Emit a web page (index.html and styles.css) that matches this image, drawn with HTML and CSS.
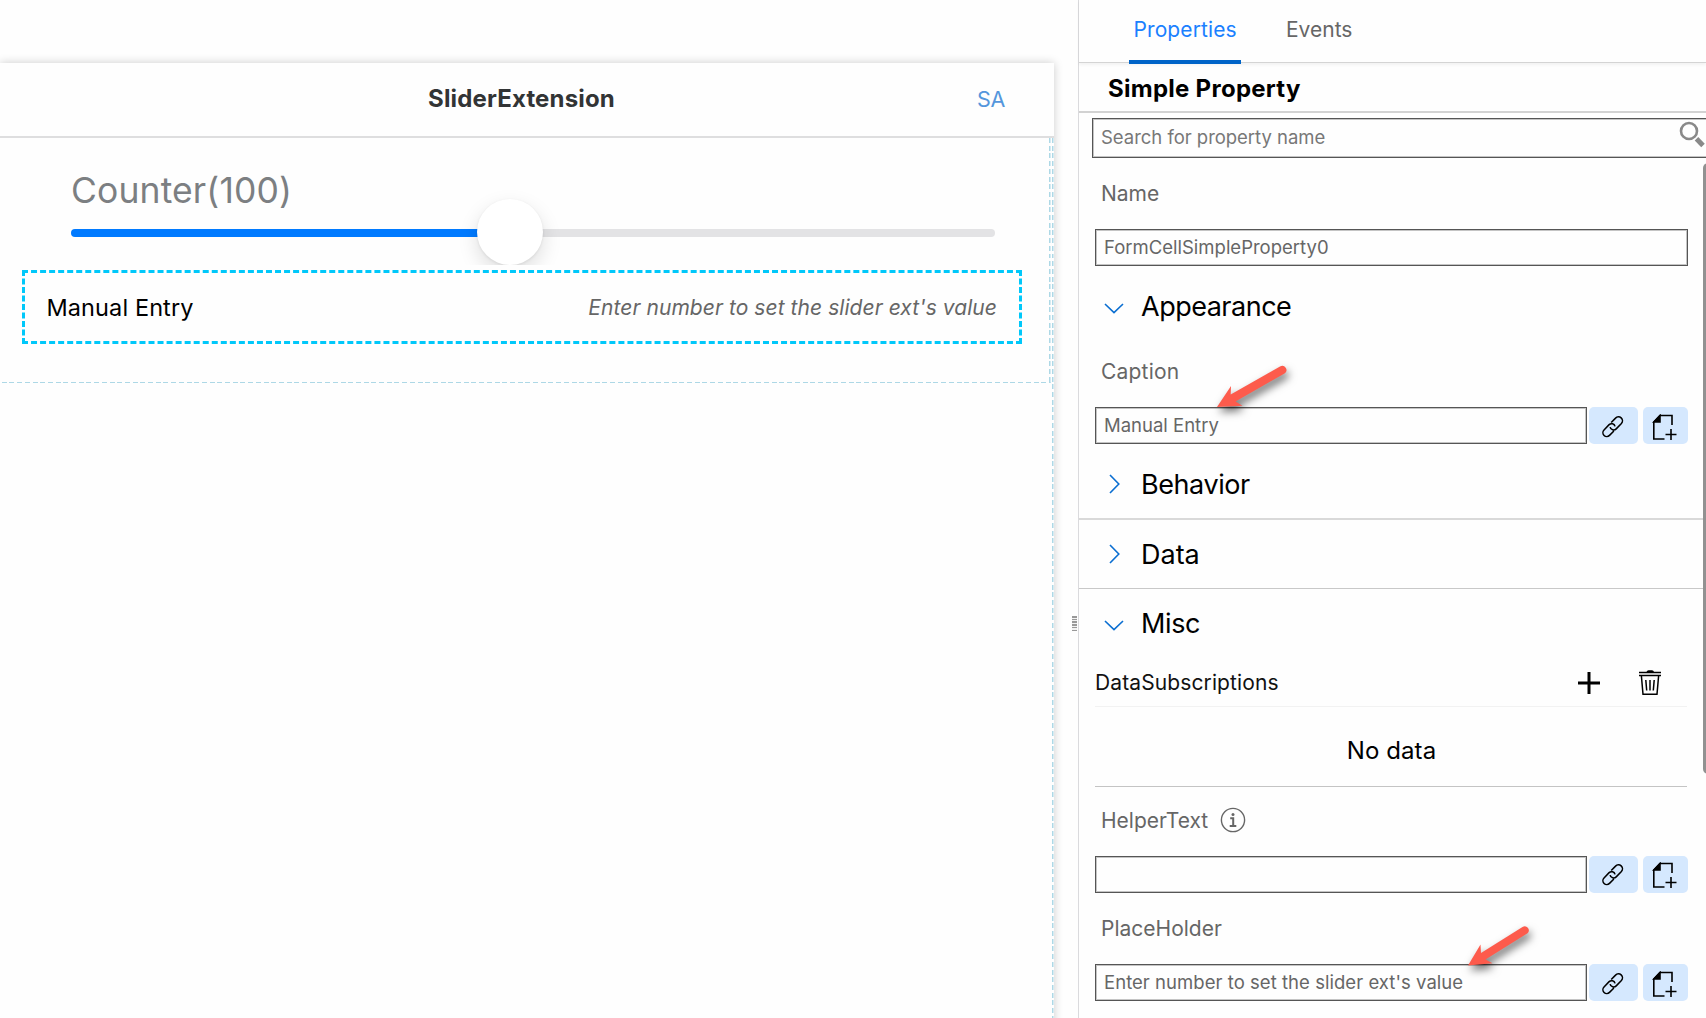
FILE: index.html
```html
<!DOCTYPE html>
<html lang="en">
<head>
<meta charset="utf-8">
<title>SliderExtension</title>
<link rel="stylesheet" href="styles.css">
</head>
<body>
<svg class="defs" width="0" height="0">
  <symbol id="link" viewBox="0 0 22 22">
    <path d="M9.4 6.6 L13.9 2 A3.6 3.6 0 0 1 20 7.6 L14.6 13.2 A3.8 3.8 0 0 1 8.2 11.4 M12.2 15.4 L7.6 20 A3.6 3.6 0 0 1 1.9 14.4 L7.2 8.8 A3.8 3.8 0 0 1 13.4 10.6" transform="translate(.2 .2) scale(.96)"/>
  </symbol>
  <symbol id="page-add" viewBox="0 0 25 27">
    <path d="M20 11 V1.5 H8 L1.8 8 V25 H12.5 M19 15 V26 M13.5 20.5 H24.5"/>
    <path class="fold" d="M8 1.5 V8 H1.8 Z"/>
  </symbol>
  <symbol id="down" viewBox="0 0 20 11"><path d="M1 1 L10 9.6 L19 1"/></symbol>
  <symbol id="right" viewBox="0 0 11 20"><path d="M1 1 L9.8 10 L1 19"/></symbol>
</svg>

<main class="canvas">
  <section class="card">
    <header class="card-head">
      <h1 class="card-title">SliderExtension</h1>
      <span class="avatar">SA</span>
    </header>
    <div class="page">
      <div class="section">
        <div class="slider">
          <div class="slider-label">Counter(100)</div>
          <div class="track"><div class="track-fill"></div><div class="track-rest"></div></div>
          <div class="thumb-clip"><div class="thumb"></div></div>
        </div>
        <div class="cell">
          <span class="cell-caption">Manual Entry</span>
          <span class="cell-value">Enter number to set the slider ext's value</span>
        </div>
      </div>
    </div>
  </section>
  <div class="grip"></div>
</main>

<aside class="panel">
  <nav class="tabs">
    <a class="tab active">Properties</a>
    <a class="tab">Events</a>
  </nav>
  <h2 class="panel-title">Simple Property</h2>
  <div class="search">
    <span>Search for property name</span>
    <svg width="28" height="28" viewBox="0 0 28 28"><circle cx="10" cy="10" r="8"/><path d="M17.5 17.8 L24 24.4"/></svg>
  </div>

  <div class="label">Name</div>
  <div class="field-row"><div class="input">FormCellSimpleProperty0</div></div>

  <div class="group appearance"><svg class="chev down"><use href="#down"/></svg><span>Appearance</span></div>
  <div class="label">Caption</div>
  <div class="field-row">
    <div class="input tight">Manual Entry</div>
    <div class="btn wide"><svg class="i-link"><use href="#link"/></svg></div>
    <div class="btn"><svg class="i-page"><use href="#page-add"/></svg></div>
  </div>

  <div class="group behavior"><svg class="chev right"><use href="#right"/></svg><span>Behavior</span></div>
  <div class="group data"><svg class="chev right"><use href="#right"/></svg><span>Data</span></div>
  <div class="group misc"><svg class="chev down"><use href="#down"/></svg><span>Misc</span></div>

  <div class="subs">
    <span>DataSubscriptions</span>
    <svg class="plus" width="22" height="22" viewBox="0 0 22 22"><path d="M11 0 V22 M0 11 H22"/></svg>
    <svg class="trash" width="22" height="26" viewBox="0 0 22 26">
      <path class="solid" d="M7.5 1.8 Q8 .2 9.5 .2 H13 Q14.5 .2 15 1.8 H22 V3.3 H0 V1.8 Z"/>
      <path d="M0 5.5 H22 M2.4 6 L4 24.2 H18 L19.6 6 M6.8 10 L7.7 20.5 M11 10 V20.5 M15.2 10 L14.3 20.5"/>
    </svg>
  </div>
  <div class="empty">No data</div>

  <div class="label helper">HelperText
    <svg width="26" height="26" viewBox="0 0 26 26"><circle cx="13" cy="13" r="11.6"/><circle class="dot" cx="13" cy="7.6" r="1.5"/><path d="M10.2 11.3 H13.2 V19 M9.7 19 H16.3"/></svg>
  </div>
  <div class="field-row">
    <div class="input"></div>
    <div class="btn wide"><svg class="i-link"><use href="#link"/></svg></div>
    <div class="btn"><svg class="i-page"><use href="#page-add"/></svg></div>
  </div>
  <div class="label placeholder">PlaceHolder</div>
  <div class="field-row">
    <div class="input long">Enter number to set the slider ext's value</div>
    <div class="btn wide"><svg class="i-link"><use href="#link"/></svg></div>
    <div class="btn"><svg class="i-page"><use href="#page-add"/></svg></div>
  </div>

  <div class="scrollbar"></div>
</aside>

<svg class="arrow first" viewBox="0 0 72 42"><path d="M0 41 L14 20 L13.7 28.5 L63 .6 A4 4 0 0 1 67.5 7.5 L18.5 35.5 L25.5 39.8 Z"/></svg>
<svg class="arrow second" viewBox="0 0 72 42"><path d="M0 40.5 L12.5 19.5 L13 28 L54.5 2 A4 4 0 0 1 59.5 8.2 L17.5 34.5 L24.5 38.3 Z"/></svg>
</body>
</html>
```
FILE: styles.css
```css
* { box-sizing: border-box; }
body {
  margin: 0;
  width: 1706px;
  height: 1018px;
  display: flex;
  position: relative;
  overflow: hidden;
  background: #fefefe;
  font-family: Inter, "Liberation Sans", sans-serif;
  color: #000;
}
.defs { position: absolute; }
svg { fill: none; display: block; flex: none; }

/* Canvas */
.canvas {
  width: 1078px;
  height: 1018px;
  padding-top: 63px;
  position: relative;
  flex: none;
  overflow: hidden;
}
.card {
  width: 1053.5px;
  height: 1000px;
  background: #fefefe;
  box-shadow: 0 0 9px rgba(0,0,0,.2);
  display: flex;
  flex-direction: column;
}
.card-head {
  height: 75px;
  flex: none;
  display: flex;
  align-items: center;
  border-bottom: 2px solid #dededf;
  padding: 0 48.5px 3px 0;
}
.card-title {
  margin: 0;
  flex: 1;
  padding-left: 66px;
  text-align: center;
  font-size: 24px;
  font-weight: 700;
  letter-spacing: .15px;
  color: #323435;
}
.avatar { font-size: 21.5px; letter-spacing: -.3px; color: #5496dc; padding-top: 1px; }
.page {
  flex: 1;
  background: repeating-linear-gradient(#add8e6 0 5px, transparent 5px 7.7px) right / 1.5px 100% no-repeat;
}
.section {
  width: 1050.5px;
  height: 245px;
  padding-left: 22px;
  background:
    repeating-linear-gradient(#add8e6 0 5px, transparent 5px 7.7px) right / 1.5px 100% no-repeat,
    repeating-linear-gradient(90deg, transparent 0 2px, #add8e6 2px 7px, transparent 7px 7.7px) bottom / 100% 1.5px no-repeat;
}
.slider { height: 132px; padding: 28px 0 0 49px; position: relative; }
.slider-label {
  height: 49px;
  line-height: 49px;
  font-size: 35.5px;
  letter-spacing: .12px;
  color: #7c7f82;
}
.track { margin-top: 14px; width: 924px; height: 7.5px; display: flex; }
.track-fill { width: 410px; background: #007aff; border-radius: 4px 0 0 4px; }
.track-rest { flex: 1; background: #e3e3e5; border-radius: 0 4px 4px 0; }
.thumb-clip {
  position: absolute;
  left: 430px;
  top: 36px;
  width: 116px;
  height: 91px;
  overflow: hidden;
}
.thumb {
  width: 66px;
  height: 66px;
  margin: 24.5px 0 0 25px;
  border-radius: 50%;
  background: #fff;
  box-shadow: 0 8px 20px rgba(0,0,0,.13), 0 1px 3px rgba(0,0,0,.08);
}
.cell {
  width: 1000px;
  height: 74px;
  border: 3px dashed #00c8fa;
  display: flex;
  align-items: center;
  justify-content: space-between;
  padding: 0 22px 0 21.5px;
}
.cell-caption { font-size: 23.5px; letter-spacing: .1px; }
.cell-value { font-size: 21px; font-style: italic; letter-spacing: .07px; color: #666; }
.grip {
  position: absolute;
  left: 1072px;
  top: 616px;
  width: 5px;
  height: 15px;
  background: repeating-linear-gradient(#999 0 1.5px, #f2f2f2 1.5px 2.7px);
}

/* Property panel */
.panel {
  width: 628px;
  flex: none;
  position: relative;
  border-left: 1.5px solid #dadadd;
  display: flex;
  flex-direction: column;
}
.tabs {
  height: 63px;
  flex: none;
  display: flex;
  gap: 41px;
  padding-left: 50px;
  border-bottom: 1px solid #d4d4d4;
  box-shadow: 0 2px 3px rgba(0,0,0,.05);
}
.tab {
  height: 63.5px;
  line-height: 60px;
  padding: 0 4px;
  font-size: 21px;
  color: #666;
}
.tab.active {
  color: #1a80ff;
  letter-spacing: .1px;
  width: 112px;
  padding-left: 4.5px;
  border-radius: 3px 3px 0 0;
  background: linear-gradient(#0064c8, #0064c8) bottom / 100% 4px no-repeat;
}
.panel-title {
  margin: 0;
  height: 50px;
  flex: none;
  padding: 2px 0 0 29px;
  line-height: 48px;
  font-size: 24px;
  font-weight: 700;
  letter-spacing: .27px;
  border-bottom: 2px solid #d2d2d2;
}
.search {
  height: 40px;
  margin: 5px -10px 0 13px;
  flex: none;
  display: flex;
  align-items: center;
  justify-content: space-between;
  padding: 0 7px 3px 8px;
  border: 1px solid #555;
  box-shadow: inset 0 0 0 1px #c4c4c4;
  font-size: 18.5px;
  letter-spacing: -.03px;
  color: #777;
}
.search svg { margin: -3px 1px 0 0; stroke: #898989; stroke-width: 2.6; }
.search path { stroke-width: 5; }
.label {
  height: 71px;
  flex: none;
  display: flex;
  align-items: center;
  padding-left: 22px;
  font-size: 21px;
  color: #666;
}
.field-row { height: 37px; flex: none; display: flex; margin: 0 18.5px 0 16px; }
.input {
  flex: 1;
  border: 1px solid #555;
  box-shadow: inset 0 0 0 1px #c4c4c4;
  padding-left: 8px;
  line-height: 34px;
  font-size: 18.5px;
  color: #666;
}
.long { letter-spacing: .04px; }
.btn {
  width: 45px;
  margin-left: 5px;
  border-radius: 5px;
  background: #d5e8fe;
  display: flex;
  align-items: center;
  justify-content: center;
  stroke: #000;
  stroke-width: 1.6;
}
.btn.wide { width: 49px; margin-left: 1.5px; }
.i-link { width: 22px; height: 22px; margin-top: 2px; }
.i-page { width: 25px; height: 27px; margin: 3px 0 0 -1px; }
.fold { fill: #000; }
.group {
  flex: none;
  display: flex;
  align-items: center;
  font-size: 27px;
  height: 69px;
  padding-left: 24.5px;
}
.chev { stroke: #0a6ed1; stroke-width: 1.6; }
.chev.down { width: 20px; height: 11px; margin: 3px 17.5px 0 0; }
.chev.right { width: 11px; height: 20px; margin: 0 21.5px 0 5px; }
.appearance { letter-spacing: -.5px; padding-top: 12px; }
.appearance + .label { height: 72px; letter-spacing: .2px; }
.behavior { height: 76px; padding-top: 6px; border-bottom: 2px solid #d9d9d9; letter-spacing: -.43px; margin-right: 3px; }
.data { border-bottom: 1px solid #c8c8c8; margin-right: 3px; }
.misc { height: 70px; padding-bottom: 1px; letter-spacing: -.39px; }
.subs {
  height: 48px;
  flex: none;
  display: flex;
  align-items: center;
  margin: 0 19px 0 16px;
  padding-right: 26px;
  border-bottom: 1px solid #f2f2f2;
  font-size: 21px;
  letter-spacing: .11px;
  stroke: #000;
}
.subs span { flex: 1; color: #111; stroke: none; }
.plus { stroke-width: 3; margin-right: 39.5px; }
.trash { stroke-width: 1.5; }
.solid { fill: #000; stroke: none; }
.empty {
  height: 80px;
  flex: none;
  margin: 0 19px 0 16px;
  padding: 7px 0 0 1px;
  line-height: 74px;
  text-align: center;
  border-bottom: 1px solid #c4c4c4;
  font-size: 24px;
  letter-spacing: .1px;
}
.helper { height: 68.5px; padding-bottom: 2px; gap: 12px; }
.helper svg { stroke: #666; stroke-width: 1.4; }
.helper path { stroke-width: 2; }
.dot { fill: #666; stroke: none; }
.placeholder { height: 71.5px; }
.scrollbar {
  position: absolute;
  right: -7px;
  top: 163px;
  width: 10px;
  height: 611px;
  border-radius: 5px;
  background: #919191;
}

/* Callout arrows */
.arrow { position: absolute; width: 72px; height: 42px; fill: #fd5b4c; filter: drop-shadow(2px 5px 4px rgba(0,0,0,.55)); overflow: visible; }
.first { left: 1217px; top: 366px; }
.second { left: 1468px; top: 925px; }
```
